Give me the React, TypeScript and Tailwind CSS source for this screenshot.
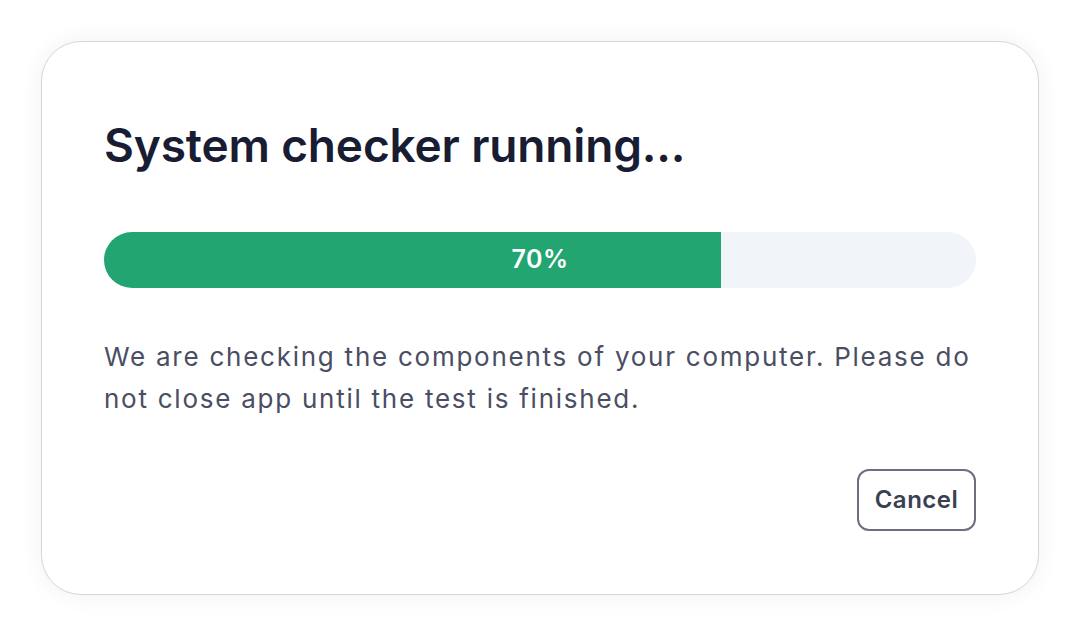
import React from "react";

export default function App() {
  const pct = 70;
  return (
    <div className="w-[1080px] h-[636px] bg-white p-[41px]" style={{ fontFamily: "Inter, 'Noto Sans', sans-serif" }}>
      <div className="w-full h-full rounded-[40px] border border-[#d4d6dd] bg-white shadow-[0_0_24px_rgba(0,0,0,0.06)] px-[62px] pt-[75px] flex flex-col">
        <h1 className="text-[46px] leading-[56px] font-semibold text-[#191d33] tracking-[-0.15px]">
          System checker running...
        </h1>
        <div className="relative mt-[59px] h-[56px] w-full rounded-full bg-[#f1f5f9] overflow-hidden">
          <div className="h-full bg-[#23a571]" style={{ width: `${pct + 0.8}%` }} />
          <div className="absolute inset-0 flex items-center justify-center text-white text-[25px] font-semibold tracking-[0.5px]">
            70%
          </div>
        </div>
        <p className="mt-[48px] text-[26px] leading-[42px] text-[#4a4e63] tracking-[1.75px]">
          We are checking the components of your computer. Please do not close app until the test is finished.
        </p>
        <div className="mt-[49px] flex justify-end">
          <button className="h-[62px] w-[119px] rounded-[12px] border-2 border-[#6c6f82] text-[24px] font-semibold text-[#3b3f52] tracking-[0.5px]">
            Cancel
          </button>
        </div>
      </div>
    </div>
  );
}
